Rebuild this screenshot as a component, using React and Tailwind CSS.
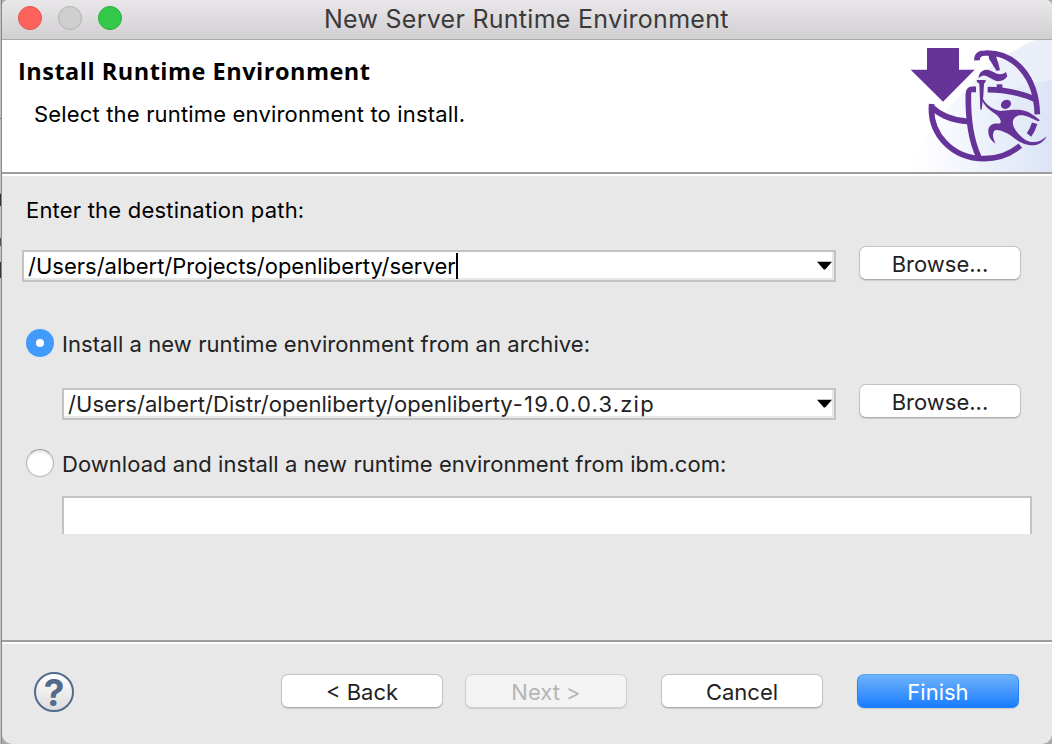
import React from "react";

const inter = "font-['Inter','Liberation_Sans',sans-serif]";

function PushButton({ children, className = "" }) {
  return (
    <button
      className={`flex h-[34px] w-[162px] shrink-0 items-center justify-center rounded-[7px] border border-[#c3c3c3] border-b-[#acacac] bg-white pt-px text-[22px] leading-none text-[#222] shadow-[0_1px_1px_rgba(0,0,0,0.12)] ${className}`}
    >
      {children}
    </button>
  );
}

function Combo({ children, className = "" }) {
  return (
    <div
      className={`flex h-8 items-center border-2 border-[#c3c3c3] bg-white pl-1 text-[22px] leading-none shadow-[inset_-2px_-2px_0_#e7e7e7] ${className}`}
    >
      {children}
      <svg className="ml-auto mr-[2px] h-[9px] w-[15px] -translate-y-px" viewBox="0 0 15 9">
        <path d="M0 .8h15L8.4 8.2q-.9.8-1.8 0z" fill="#000" />
      </svg>
    </div>
  );
}

function InstallLogo() {
  return (
    <svg className="h-[132px] w-[160px]" viewBox="0 12 480 396">
      <defs>
        <linearGradient id="sky" x1="0" y1="0" x2="1" y2="0">
          <stop offset="0" stopColor="#fff" />
          <stop offset=".2" stopColor="#fbfcff" />
          <stop offset=".6" stopColor="#eaf0fa" />
          <stop offset="1" stopColor="#dce4f5" />
        </linearGradient>
        <linearGradient id="glow" x1="0" y1="0" x2="1" y2="0">
          <stop offset="0" stopColor="#fff" stopOpacity="0" />
          <stop offset="1" stopColor="#fff" stopOpacity=".4" />
        </linearGradient>
      </defs>
      <path d="M40 408C130 250 250 90 430 12H480V408z" fill="url(#sky)" />
      <path d="M240 130C300 80 350 45 430 12H480V132C400 145 320 160 240 250z" fill="url(#glow)" />
      <path d="M105 36H201V101H248L153 197L56 101H105z" fill="#663399" />
      <g fill="none" stroke="#663399" strokeWidth="17">
        <path d="M255 73C254 58 264 51 280 51C365 48 433 119 436 235" />
        <path d="M119 204C111 292 179 368 277 368C320 368 356 353 385 329" />
        <path d="M116 211C145 238 184 254 227 256" />
        <path d="M252 160H241C232 160 229 166 229 177C228 247 236 310 260 362" />
        <path d="M287 161C339 162 390 171 431 191" />
        <path d="M428 262C424 276 419 286 411 297" />
      </g>
      <g fill="#663399">
        <path d="M288 46L308 48L319 82L324 102L314 105L304 89L291 68z" />
        <path d="M260 122C264 104 280 97 296 104C314 113 326 120 342 108L346 121C336 135 322 139 307 133L283 120Q270 115 260 126z" />
        <path d="M314 145H331V159H314z" />
        <path d="M254 132H281V137L276 143L274 181L269 221H265L262 143L255 138z" />
        <path d="M269 180C279 205 299 221 326 225C355 222 383 217 409 228Q430 240 444 253L438 256L410 243C388 233 370 238 364 251C359 265 366 279 382 296C403 320 435 329 464 301C450 329 423 334 392 322C371 313 360 298 342 290C326 284 312 278 306 286C300 297 304 310 311 323C297 313 289 302 289 287C288 268 302 260 321 263C331 262 327 245 309 233C291 221 275 207 268 188z" />
        <ellipse cx="342" cy="205" rx="16" ry="13" transform="rotate(-30 342 205)" />
      </g>
    </svg>
  );
}

export default function App() {
  return (
    <div className={`flex h-[744px] w-[1052px] overflow-hidden bg-[#aaa] ${inter}`}>
      <div className="flex w-[2px] shrink-0 flex-col border-r border-[#888] bg-[#c2c2c2]">
        <div className="h-[119px] border-b border-[#777]" />
        <div className="h-[75px] border-b border-[#999]" />
        <div className="h-3 bg-[#333]" />
        <div className="h-8" />
        <div className="h-2 bg-[#555]" />
        <div className="h-4" />
        <div className="h-4 bg-[#333]" />
      </div>
      <div className="flex w-[1050px] flex-col overflow-hidden rounded-t-[6px] rounded-b-[10px] bg-[#e8e8e8]">
        <div className="flex h-10 shrink-0 items-center border-b border-[#aaa9aa] bg-linear-to-b from-[#e9e7e9] to-[#d1cfd1]">
          <div className="flex w-[322px] gap-4 pl-4 pb-[3px]">
            <span className="size-6 rounded-full border border-[#e2504c] bg-[#fd625d]" />
            <span className="size-6 rounded-full border border-[#b3b2b3] bg-[#d0cfd0]" />
            <span className="size-6 rounded-full border border-[#27ae38] bg-[#34c94a]" />
          </div>
          <h1 className="whitespace-nowrap text-[25px] leading-none tracking-[0.27px] text-[#3b3a3b]">New Server Runtime Environment</h1>
        </div>
        <div className="flex h-[134px] shrink-0 justify-between border-b-2 border-[#9d9d9d] bg-white">
          <div className="pl-4 pt-[15px] text-black">
            <h2 className="whitespace-nowrap font-['Open_Sans',sans-serif] text-[23.5px] font-bold leading-8 tracking-[0.5px]">Install Runtime Environment</h2>
            <p className="mt-3 whitespace-nowrap pl-4 text-[22px] leading-[30px] tracking-[0.17px]">Select the runtime environment to install.</p>
          </div>
          <InstallLogo />
        </div>
        <main className="flex h-[466px] shrink-0 flex-col border-t-2 border-white pl-5 pr-[19px]">
          <p className="mt-[19px] pl-1 text-[22px] leading-[30px] tracking-[0.2px] text-black">Enter the destination path:</p>
          <div className="mt-[21px] flex h-9 items-start gap-[23px]">
            <Combo className="mt-1 w-[814px] text-black">
              <span className="whitespace-nowrap">/Users/albert/Projects/openliberty/server</span>
              <span className="h-[26px] w-[2px] bg-black" />
            </Combo>
            <PushButton>Browse...</PushButton>
          </div>
          <div className="mt-[46px] flex h-[30px] items-center gap-2 pl-1 text-[22px] leading-none text-[#222]">
            <span className="flex size-7 items-center justify-center rounded-full bg-[#429bfa]">
              <span className="size-2 rounded-full bg-white" />
            </span>
            <span className="whitespace-nowrap pt-[2px] tracking-[0.07px]">Install a new runtime environment from an archive:</span>
          </div>
          <div className="mt-[26px] flex h-9 items-start gap-[23px] pl-10">
            <Combo className="mt-1 w-[774px] text-[#222]">
              <span className="whitespace-nowrap tracking-[0.05px]">
                /Users/albert/Distr/openliberty/openliberty
                <span className="tracking-[1.2px]">-19.0.0.3.zip</span>
              </span>
            </Combo>
            <PushButton>Browse...</PushButton>
          </div>
          <div className="mt-7 flex h-[30px] items-center gap-2 pl-1 text-[22px] leading-none text-[#222]">
            <span className="size-7 rounded-full border border-[#b5b5b5] border-t-[#999] bg-white shadow-[inset_0_2px_2px_#e5e5e5]" />
            <span className="whitespace-nowrap pt-[2px] tracking-[0.05px]">Download and install a new runtime environment from ibm.com:</span>
          </div>
          <div className="ml-10 mt-[18px] h-[38px] w-[970px] border-2 border-b-0 border-[#c3c3c3] bg-white" />
        </main>
        <footer className="flex h-[104px] shrink-0 items-start border-t-2 border-[#9d9d9d] shadow-[inset_0_2px_0_white]">
          <div className="ml-8 mt-[30px] flex size-10 items-center justify-center rounded-full border-2 border-[#526a8b] bg-linear-to-b from-white to-[#ddd] text-[37px] font-bold leading-none text-[#526a8b]">?</div>
          <div className="ml-[207px] mt-8 flex">
            <PushButton>&lt; Back</PushButton>
            <PushButton className="ml-[22px] !border-[#d0d0d0] !bg-[#f3f3f3] !text-[#b5b5b5]">Next &gt;</PushButton>
            <PushButton className="ml-[34px]">Cancel</PushButton>
            <PushButton className="ml-[34px] !border-[#2583f5] !border-t-[#5da6ee] bg-linear-to-b from-[#6db3fa] to-[#147bff] !text-white">Finish</PushButton>
          </div>
        </footer>
      </div>
    </div>
  );
}
